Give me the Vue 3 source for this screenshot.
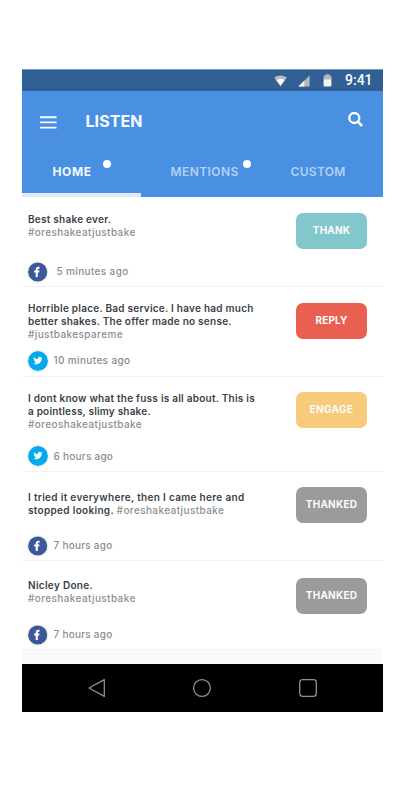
<script setup>
const tabs = [
  { label: 'HOME', active: true, badge: true, cls: 'home' },
  { label: 'MENTIONS', active: false, badge: true, cls: 'mentions' },
  { label: 'CUSTOM', active: false, badge: false, cls: 'custom' },
]

const posts = [
  {
    id: 1,
    lines: [[{ text: 'Best shake ever.' }], [{ text: '#oreshakeatjustbake', tag: true }]],
    network: 'facebook',
    time: '5 minutes ago',
    action: 'THANK',
  },
  {
    id: 2,
    lines: [
      [{ text: 'Horrible place. Bad service. I have had much' }],
      [{ text: 'better shakes. The offer made no sense.' }],
      [{ text: '#justbakespareme', tag: true }],
    ],
    network: 'twitter',
    time: '10 minutes ago',
    action: 'REPLY',
  },
  {
    id: 3,
    lines: [
      [{ text: 'I dont know what the fuss is all about. This is' }],
      [{ text: 'a pointless, slimy shake.' }],
      [{ text: '#oreoshakeatjustbake', tag: true }],
    ],
    network: 'twitter',
    time: '6 hours ago',
    action: 'ENGAGE',
  },
  {
    id: 4,
    lines: [
      [{ text: 'I tried it everywhere, then I came here and' }],
      [{ text: 'stopped looking. ' }, { text: '#oreshakeatjustbake', tag: true }],
    ],
    network: 'facebook',
    time: '7 hours ago',
    action: 'THANKED',
  },
  {
    id: 5,
    lines: [[{ text: 'Nicley Done.' }], [{ text: '#oreshakeatjustbake', tag: true }]],
    network: 'facebook',
    time: '7 hours ago',
    action: 'THANKED',
  },
]
</script>

<template>
  <main class="phone">
    <div class="status">
      <svg class="wifi" width="13" height="12" viewBox="0 0 13 12">
        <path d="M.2 2.6Q6.5-1.4 12.8 2.6L6.5 11.2Z" fill="#b9bdbf" />
        <path d="M2.3 5Q6.5 3 10.7 5L6.5 10.8Z" fill="#fff" />
      </svg>
      <svg class="signal" width="12" height="12" viewBox="0 0 12 12">
        <path d="M11.6.4V11.6H.4Z" fill="#b5b9bb" />
        <path d="M6.4 5.6V11.6H.4Z" fill="#f4f6f8" />
      </svg>
      <svg class="battery" width="9" height="13" viewBox="0 0 9 13">
        <path d="M2.6.3h3.8v1.2h1.1q.9 0 .9.9V6H.6V2.4q0-.9.9-.9h1.1Z" fill="#b5b9bb" />
        <path d="M.6 5.6h7.8v5.9q0 .9-.9.9h-6q-.9 0-.9-.9Z" fill="#f4f4f4" />
      </svg>
      <span class="clock">9:41</span>
    </div>

    <header class="header">
      <div class="bar">
        <svg class="menu" width="17" height="13" viewBox="0 0 17 13">
          <path d="M0 1.2h16.5M0 6.4h16.5M0 11.6h16.5" stroke="#fff" stroke-width="1.9" />
        </svg>
        <h1>LISTEN</h1>
        <svg class="search" width="17" height="17" viewBox="0 0 17 17">
          <circle cx="7.3" cy="7" r="5" fill="none" stroke="#fff" stroke-width="2.3" />
          <path d="M11 10.8L14.3 14.2" stroke="#fff" stroke-width="2.6" stroke-linecap="round" />
        </svg>
      </div>
      <nav class="tabs">
        <div v-for="t in tabs" :key="t.label" class="tab" :class="[t.cls, { active: t.active }]">
          <span class="label">{{ t.label }}<i v-if="t.badge" class="dot"></i></span>
        </div>
      </nav>
    </header>

    <article v-for="p in posts" :key="p.id" class="post" :class="'post-' + p.id">
      <div class="body">
        <div class="message">
          <p v-for="(line, i) in p.lines" :key="i" :class="'line-' + (i + 1)">
            <span v-for="part in line" :key="part.text" :class="{ tag: part.tag }">{{ part.text }}</span>
          </p>
        </div>
        <div class="meta">
          <svg v-if="p.network === 'facebook'" class="avatar" width="20" height="20" viewBox="0 0 20 20">
            <circle cx="9.6" cy="10" r="9.6" fill="#3b5998" />
            <path
              d="M7.7 15.1V10.6H6.1V8.6H7.7V7.3Q7.7 4.8 10.1 4.8H11.5V6.7H10.6Q9.8 6.7 9.8 7.5V8.6H11.5L11.2 10.6H9.8V15.1Z"
              fill="#fff"
            />
          </svg>
          <svg v-else class="avatar" width="20" height="20" viewBox="0 0 20 20">
            <circle cx="10" cy="10" r="10" fill="#00aaf0" />
            <g transform="translate(5.4 5) scale(.38)">
              <path
                d="M23.95 4.57a10 10 0 0 1-2.82.77 4.96 4.96 0 0 0 2.16-2.72c-.95.55-2 .95-3.13 1.18a4.92 4.92 0 0 0-8.38 4.48C7.69 8.09 4.07 6.13 1.64 3.16a4.92 4.92 0 0 0 1.52 6.57 4.9 4.9 0 0 1-2.23-.61v.06a4.92 4.92 0 0 0 3.95 4.83 5 5 0 0 1-2.21.08 4.94 4.94 0 0 0 4.6 3.42A9.87 9.87 0 0 1 0 19.54a13.99 13.99 0 0 0 7.55 2.21c9.05 0 14-7.5 14-13.98 0-.21 0-.42-.02-.63a9.94 9.94 0 0 0 2.46-2.55z"
                fill="#fff"
              />
            </g>
          </svg>
          <time>{{ p.time }}</time>
        </div>
      </div>
      <button class="action" :class="p.action.toLowerCase()">{{ p.action }}</button>
    </article>

    <div class="gap"></div>

    <footer class="nav">
      <svg width="20" height="20" viewBox="0 0 20 20">
        <path d="M3 10L18.3 1.6V18.4Z" />
      </svg>
      <svg width="20" height="20" viewBox="0 0 20 20">
        <circle cx="10" cy="10" r="8.4" />
      </svg>
      <svg width="20" height="20" viewBox="0 0 20 20">
        <rect x="1.7" y="1.7" width="16.6" height="16.6" rx="2.8" />
      </svg>
    </footer>
  </main>
</template>

<style>
body {
  background: #fff;
}
</style>

<style scoped>
.phone {
  width: 361.5px;
  margin: 69px 0 0 21.5px;
  font-family: Inter, 'Liberation Sans', sans-serif;
}
.status {
  display: flex;
  align-items: flex-start;
  height: 22px;
  background: #306095;
  box-sizing: border-box;
  border-top: 1px solid #7c9bbd;
}
.wifi {
  margin: 5px 0 0 252.5px;
}
.signal {
  margin: 4.5px 0 0 11px;
}
.battery {
  margin: 4px 0 0 13px;
}
.clock {
  margin: 2px 0 0 13px;
  font: 500 14px/16px Roboto, sans-serif;
  color: #fff;
}
.header {
  height: 106px;
  background: #4990e2;
  display: flex;
  flex-direction: column;
}
.bar {
  display: flex;
  height: 54px;
  align-items: flex-start;
}
.menu {
  margin: 25px 0 0 18.5px;
}
h1 {
  margin: 20px 0 0 28.5px;
  width: 254px;
  font-size: 16px;
  line-height: 20px;
  font-weight: 700;
  letter-spacing: 0.05px;
  color: #f6faff;
}
.search {
  margin: 20px 0 0 7px;
  flex: none;
}
.tabs {
  display: flex;
  flex: 1;
}
.tab {
  width: 120px;
  box-sizing: border-box;
  padding-top: 19px;
  font-size: 12px;
  line-height: 16px;
  font-weight: 600;
  color: #b3d1f4;
  border-bottom: 4px solid transparent;
}
.tab.active {
  color: #f4f9ff;
  border-bottom-color: #dfe9f9;
}
.label {
  position: relative;
}
.tab.home {
  width: 119.5px;
  padding-left: 31px;
  font-weight: 700;
  letter-spacing: 0.6px;
}
.mentions {
  padding-left: 29.5px;
  letter-spacing: 0.42px;
}
.custom {
  padding-left: 29.5px;
  letter-spacing: 0.32px;
}
.dot {
  position: absolute;
  top: -4.5px;
  right: -19.5px;
  width: 8px;
  height: 8px;
  border-radius: 50%;
  background: #fff;
}
.mentions .dot {
  right: -12px;
}
.post {
  display: flex;
  align-items: flex-start;
  box-sizing: border-box;
  border-bottom: 1px solid #f2f2f2;
  background: #fff;
}
.body {
  width: 274.5px;
  height: 100%;
  padding-left: 6.5px;
  box-sizing: border-box;
  display: flex;
  flex-direction: column;
  justify-content: space-between;
}
p {
  margin: 0;
  font-size: 10px;
  line-height: 13px;
  font-weight: 600;
  letter-spacing: 0.25px;
  color: #3a3f47;
  white-space: pre;
}
p .tag {
  color: #8e8e8e;
  font-weight: 500;
  letter-spacing: 0.4px;
}
.meta {
  display: flex;
  align-items: center;
  height: 20px;
}
.avatar {
  flex: none;
  border-radius: 50%;
  filter: drop-shadow(0 0 1px rgba(0, 0, 0, 0.25));
}
time {
  margin-left: 5.5px;
  padding-bottom: 1.5px;
  font-size: 10px;
  line-height: 12px;
  font-weight: 500;
  letter-spacing: 0.36px;
  color: #8c8c8c;
}
.action {
  width: 71px;
  height: 36px;
  flex: none;
  border: 0;
  border-radius: 7px;
  padding: 0 0 2px;
  font: 700 10px/14px Inter, sans-serif;
  letter-spacing: 0.2px;
  color: #fafcfc;
}
.thank {
  background: #82c7cb;
}
.reply {
  background: #e95f50;
}
.engage {
  background: #f8ca7b;
  letter-spacing: 0.4px;
}
.thanked {
  background: #9b9b9b;
  letter-spacing: 0.25px;
}
.post-1 {
  height: 90px;
}
.post-1 .body {
  padding-top: 16px;
  padding-bottom: 4px;
}
.post-1 .action {
  margin-top: 16px;
}
.post-1 time {
  margin-left: 8.5px;
}
.post-2 {
  height: 90px;
}
.post-2 .body {
  padding-top: 15px;
  padding-bottom: 5px;
}
.post-2 .action {
  margin-top: 15.5px;
  height: 36.5px;
}
.post-3 {
  height: 95px;
}
.post-3 .body {
  padding-top: 15px;
  padding-bottom: 5px;
}
.post-3 .line-2 {
  letter-spacing: 0.2px;
}
.post-3 .action {
  margin-top: 15px;
}
.post-3 time {
  padding-bottom: 0;
  letter-spacing: 0.25px;
}
.post-4 {
  height: 89px;
}
.post-4 .body {
  padding-top: 19px;
  padding-bottom: 4px;
}
.post-4 p {
  letter-spacing: 0.32px;
}
.post-4 .action {
  margin-top: 15px;
}
.post-4 time,
.post-5 time {
  letter-spacing: 0.25px;
}
.post-5 {
  height: 89px;
  border-bottom-color: #f4f4f4;
}
.post-5 .body {
  padding-top: 18px;
  padding-bottom: 4px;
}
.post-5 time {
  padding-bottom: 2px;
}
.post-5 p {
  letter-spacing: 0.3px;
}
.post-5 .action {
  margin-top: 17px;
}
.gap {
  height: 14px;
  background: #fafafa;
}
.nav {
  height: 47.5px;
  background: #000;
  display: flex;
  align-items: center;
  gap: 86px;
  padding-left: 64.5px;
  box-sizing: border-box;
}
.nav svg {
  fill: none;
  stroke: #909090;
  stroke-width: 1.3;
  stroke-linejoin: round;
}
</style>
